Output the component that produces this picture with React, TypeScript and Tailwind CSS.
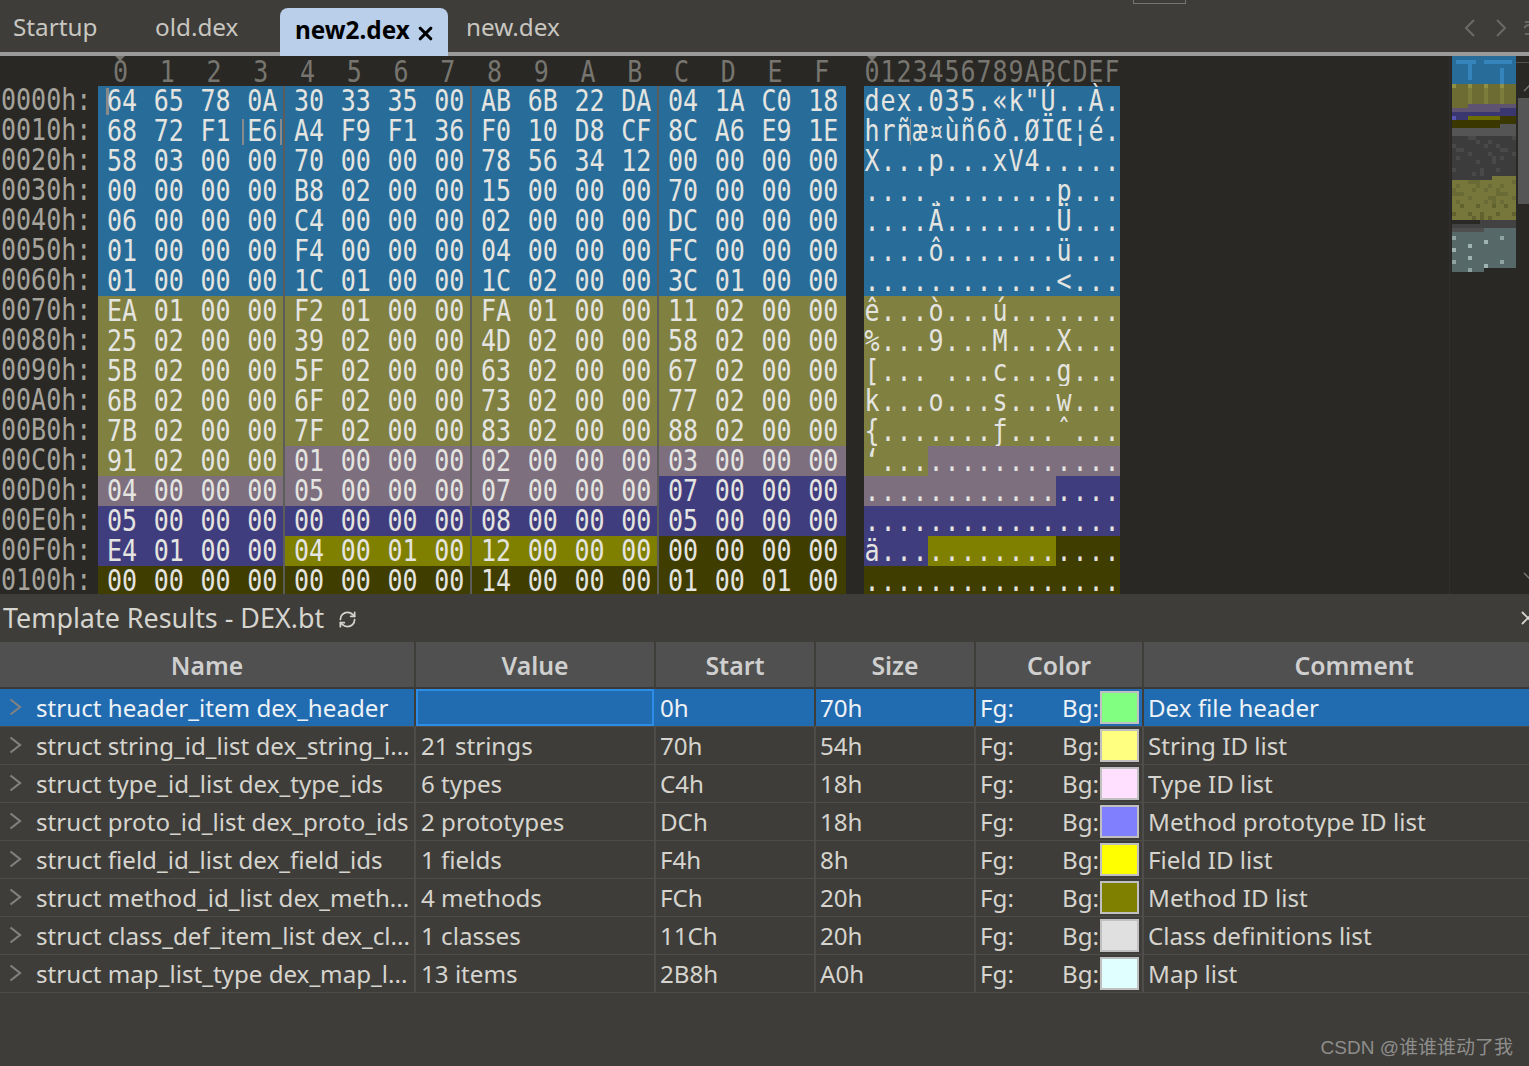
import React from 'react';
import { RefreshCw, X } from 'lucide-react';

const hexRows = [
  '64 65 78 0A 30 33 35 00 AB 6B 22 DA 04 1A C0 18',
  '68 72 F1 E6 A4 F9 F1 36 F0 10 D8 CF 8C A6 E9 1E',
  '58 03 00 00 70 00 00 00 78 56 34 12 00 00 00 00',
  '00 00 00 00 B8 02 00 00 15 00 00 00 70 00 00 00',
  '06 00 00 00 C4 00 00 00 02 00 00 00 DC 00 00 00',
  '01 00 00 00 F4 00 00 00 04 00 00 00 FC 00 00 00',
  '01 00 00 00 1C 01 00 00 1C 02 00 00 3C 01 00 00',
  'EA 01 00 00 F2 01 00 00 FA 01 00 00 11 02 00 00',
  '25 02 00 00 39 02 00 00 4D 02 00 00 58 02 00 00',
  '5B 02 00 00 5F 02 00 00 63 02 00 00 67 02 00 00',
  '6B 02 00 00 6F 02 00 00 73 02 00 00 77 02 00 00',
  '7B 02 00 00 7F 02 00 00 83 02 00 00 88 02 00 00',
  '91 02 00 00 01 00 00 00 02 00 00 00 03 00 00 00',
  '04 00 00 00 05 00 00 00 07 00 00 00 07 00 00 00',
  '05 00 00 00 00 00 00 00 08 00 00 00 05 00 00 00',
  'E4 01 00 00 04 00 01 00 12 00 00 00 00 00 00 00',
  '00 00 00 00 00 00 00 00 14 00 00 00 01 00 01 00',
];

const columns = '0123456789ABCDEF'.split('');

// background of a byte depends on which template struct owns it
const byteBg = (offset: number) => {
  if (offset < 0x70) return 'bg-[#286d9a]';
  if (offset < 0xc4) return 'bg-[#808040]';
  if (offset < 0xdc) return 'bg-[#7e6f7f]';
  if (offset < 0xf4) return 'bg-[#403d7f]';
  if (offset < 0xfc) return 'bg-[#808000]';
  return 'bg-[#403d00]';
};

const decoder = new TextDecoder('windows-1252');
const toAscii = (value: number) => {
  if (value < 0x20 || value === 0x7f) return '.';
  return decoder.decode(new Uint8Array([value]));
};

const monoFont = { fontFamily: '"DejaVu Sans Mono", monospace' };

const structs = [
  { name: 'struct header_item dex_header', value: '', start: '0h', size: '70h', color: 'bg-[#80ff80]', comment: 'Dex file header' },
  { name: 'struct string_id_list dex_string_i...', value: '21 strings', start: '70h', size: '54h', color: 'bg-[#ffff80]', comment: 'String ID list' },
  { name: 'struct type_id_list dex_type_ids', value: '6 types', start: 'C4h', size: '18h', color: 'bg-[#ffe0ff]', comment: 'Type ID list' },
  { name: 'struct proto_id_list dex_proto_ids', value: '2 prototypes', start: 'DCh', size: '18h', color: 'bg-[#8080ff]', comment: 'Method prototype ID list' },
  { name: 'struct field_id_list dex_field_ids', value: '1 fields', start: 'F4h', size: '8h', color: 'bg-[#ffff00]', comment: 'Field ID list' },
  { name: 'struct method_id_list dex_meth...', value: '4 methods', start: 'FCh', size: '20h', color: 'bg-[#808000]', comment: 'Method ID list' },
  { name: 'struct class_def_item_list dex_cl...', value: '1 classes', start: '11Ch', size: '20h', color: 'bg-[#e0e0e0]', comment: 'Class definitions list' },
  { name: 'struct map_list_type dex_map_l...', value: '13 items', start: '2B8h', size: 'A0h', color: 'bg-[#e0ffff]', comment: 'Map list' },
];

const tableCols = 'grid grid-cols-[416px_240px_160px_160px_168px_420px]';

const Chevron = ({ dir, className }: { dir: 'left' | 'right'; className?: string }) => (
  <svg width="12" height="20" viewBox="0 0 12 20" fill="none" className={className}>
    <path d={dir === 'right' ? 'M2 2l8 8-8 8' : 'M10 2l-8 8 8 8'} stroke="currentColor" strokeWidth="2" />
  </svg>
);

const Tabs = () => (
  <div className="relative h-[56px] shrink-0 bg-[#3e3d39] border-b-4 border-[#9a9a9a] flex items-end text-[24.3px] text-[#c8c6c0]">
    <div className="absolute left-[1133px] top-0 w-[53px] h-[4px] border border-t-0 border-[#77756f]" />
    <div className="w-[142px] h-[48px] pl-[13px] leading-[46px]">Startup</div>
    <div className="w-[138px] h-[48px] pl-[13px] leading-[46px]">old.dex</div>
    <div className="w-[168px] h-[48px] -mb-1 pl-[15px] leading-[44px] rounded-t-lg bg-[#b9cfea] text-black font-bold flex items-start gap-[5px]">
      new2.dex
      <X size={21} strokeWidth={3.6} className="mt-[15px]" />
    </div>
    <div className="h-[48px] pl-[18px] leading-[46px]">new.dex</div>
    <div className="ml-auto mr-[22px] h-[48px] flex items-center gap-[19px] text-[#6b6a66]">
      <Chevron dir="left" />
      <Chevron dir="right" />
    </div>
    <svg width="5" height="14" viewBox="0 0 5 14" fill="none" className="absolute right-0 top-[21px] text-[#6b6a66]">
      <path d="M1 1h4M0 7c2-3 4-3 5-3M1 13h4" stroke="currentColor" strokeWidth="2" />
    </svg>
  </div>
);

const HexHeader = () => (
  <div className="flex h-[30px] pl-[98px] text-[25px] leading-[30px] text-[#77756f] relative" style={monoFont}>
    <div className="absolute left-[115px] top-0 w-0 h-0 border-x-[5px] border-t-[5px] border-x-transparent border-t-[#77756f]" />
    <div className="absolute left-[867px] top-0 w-0 h-0 border-x-[5px] border-t-[5px] border-x-transparent border-t-[#77756f]" />
    {columns.map((c) => (
      <div key={c} className="w-[46.75px] pl-[15px] shrink-0 pt-[3px]">
        <span className="block h-[25px] leading-[25px] scale-y-[1.18]">{c}</span>
      </div>
    ))}
    <div className="ml-[18px] flex pt-[3px]">
      {columns.map((c) => (
        <span key={c} className="block w-4 h-[25px] leading-[25px] text-center scale-y-[1.18]">{c}</span>
      ))}
    </div>
  </div>
);

const HexRow = ({ line, row }: { line: string; row: number }) => {
  const bytes = line.split(' ');
  const base = row * 16;
  return (
    <div className="flex h-[30px] text-[25px] leading-[25px] text-[#e4e4e0] whitespace-nowrap" style={monoFont}>
      <div className="w-[98px] shrink-0 pl-[1px] pt-[1px] text-[#a5a39c]">
        <span className="block h-[25px] scale-y-[1.18]">{base.toString(16).toUpperCase().padStart(4, '0')}h:</span>
      </div>
      {bytes.map((b, i) => (
        <div
          key={i}
          className={`relative w-[46.75px] shrink-0 pl-[9px] pt-[2px] border-[#5c5c5a] ${byteBg(base + i)} ${i % 4 === 3 && i < 15 ? 'border-r-2' : ''}`}
        >
          {base + i === 0 && <div className="absolute left-[8px] top-[2px] w-[3px] h-[27px] bg-[#8a8a8a]" />}
          {base + i === 0x13 && <div className="absolute left-[4px] top-[3px] w-[40px] h-[26px] border-x-2 border-[#8a8a8a]" />}
          <span className="block h-[25px] scale-y-[1.18]">{b}</span>
        </div>
      ))}
      <div className="ml-[18px] flex">
        {bytes.map((b, i) => (
          <span key={i} className={`relative block w-4 pt-[2px] text-center ${byteBg(base + i)}`}>
            {base + i === 0x13 && <span className="absolute -left-[2px] top-[3px] w-[22px] h-[26px] border-x border-[#8a8a8a]" />}
            <span className="block h-[25px] scale-y-[1.18]">{toAscii(parseInt(b, 16))}</span>
          </span>
        ))}
      </div>
    </div>
  );
};

// minimap blocks, [x, y, w, h, colour] in 4px cells from the top-left of the strip
const miniBands: [number, number, number, number, string][] = [
  [0, 0, 16, 7, '#286d9a'],
  [1, 1, 5, 1, '#3585bc'],
  [8, 1, 7, 1, '#3585bc'],
  [4, 2, 1, 4, '#3585bc'],
  [12, 3, 1, 4, '#3585bc'],
  [0, 7, 16, 5, '#6c6c33'],
  [0, 12, 4, 1, '#6c6c33'],
  [0, 7, 1, 1, '#8f8f45'],
  [4, 7, 1, 1, '#8f8f45'],
  [8, 7, 1, 1, '#8f8f45'],
  [12, 7, 1, 1, '#8f8f45'],
  [4, 8, 1, 4, '#7c7c3c'],
  [8, 8, 1, 4, '#7c7c3c'],
  [12, 8, 1, 4, '#7c7c3c'],
  [4, 12, 12, 1, '#5e5370'],
  [0, 13, 12, 1, '#5e5370'],
  [12, 13, 4, 2, '#3a3670'],
  [0, 14, 12, 1, '#3a3670'],
  [0, 15, 4, 1, '#3a3670'],
  [0, 15, 1, 1, '#5554b0'],
  [4, 15, 8, 1, '#6e6e00'],
  [12, 15, 4, 1, '#3a3800'],
  [0, 16, 16, 2, '#3a3800'],
  [12, 17, 4, 1, '#555555'],
  [0, 18, 16, 2, '#555555'],
  [0, 20, 16, 10, '#3c3c3c'],
  [0, 30, 10, 1, '#3c3c3c'],
  [10, 30, 6, 1, '#77773c'],
  [0, 31, 16, 10, '#77773c'],
  [7, 41, 9, 1, '#424242'],
  [0, 42, 16, 1, '#424242'],
  [0, 43, 16, 1, '#4f4f4f'],
  [8, 43, 8, 1, '#566868'],
  [0, 44, 16, 10, '#566868'],
  [8, 53, 8, 1, '#292824'],
  [0, 45, 1, 1, '#8fa3a3'],
  [0, 48, 1, 1, '#9fb3b3'],
  [0, 51, 1, 1, '#8fa3a3'],
  [4, 47, 1, 1, '#9fb3b3'],
  [4, 50, 1, 1, '#9fb3b3'],
  [4, 53, 1, 1, '#8fa3a3'],
  [8, 46, 1, 1, '#9fb3b3'],
  [8, 52, 1, 1, '#9fb3b3'],
  [12, 45, 1, 1, '#8fa3a3'],
  [12, 51, 1, 1, '#8fa3a3'],
];

const miniNoise = (x: number, y: number) => ((x * 7 + y * 13 + x * y * 3) % 11);

const Minimap = () => {
  const noise: React.ReactElement[] = [];
  for (let y = 20; y < 41; y++) {
    for (let x = 0; x < 16; x++) {
      const n = miniNoise(x, y);
      if (y < 30 && n < 2) noise.push(<rect key={`${x}-${y}`} x={x * 4} y={y * 4} width="4" height="4" fill="#494949" />);
      if (y >= 31 && n < 3) noise.push(<rect key={`${x}-${y}`} x={x * 4} y={y * 4} width="4" height="4" fill={y > 36 ? '#62622e' : '#6a6a34'} />);
    }
  }
  return (
    <svg width="64" height="216" viewBox="0 0 64 216" className="shrink-0" shapeRendering="crispEdges">
      {miniBands.map(([x, y, w, h, fill], i) => (
        <rect key={i} x={x * 4} y={y * 4} width={w * 4} height={h * 4} fill={fill} />
      ))}
      {noise}
    </svg>
  );
};

const Scrollbar = () => (
  <div className="relative flex-1">
    <div className="absolute left-0 right-0 top-[6px] h-px bg-[#55544f]" />
    <div className="absolute left-[2px] right-0 top-[42px] h-[106px] bg-[#565656]" />
    <Chevron dir="left" className="absolute left-[8px] top-[22px] rotate-90 text-[#77756f] scale-75" />
    <Chevron dir="right" className="absolute left-[8px] top-[510px] rotate-90 text-[#77756f] scale-75" />
  </div>
);

const HexView = () => (
  <div className="flex h-[538px] shrink-0 bg-[#292824] overflow-hidden">
    <div className="w-[1450px] shrink-0 overflow-hidden border-r border-[#302e2f]">
      <HexHeader />
      {hexRows.map((line, i) => (
        <HexRow key={i} line={line} row={i} />
      ))}
    </div>
    <div className="ml-[2px]">
      <Minimap />
    </div>
    <Scrollbar />
  </div>
);

const TemplateTable = () => (
  <div className="text-[24.15px] text-[#d6d4ce]">
    <div className={`${tableCols} h-[47px] bg-[#505050] border-b-2 border-[#3a3936] font-semibold text-[24.8px] text-[#cfcfcf] text-center leading-[47px]`}>
      {['Name', 'Value', 'Start', 'Size', 'Color', 'Comment'].map((h, i) => (
        <div key={h} className={i < 5 ? 'border-r-2 border-[#3e3d39]' : ''}>{h}</div>
      ))}
    </div>
    {structs.map((s, i) => {
      const selected = i === 0;
      const line = selected ? 'border-[#3e3d39]' : 'border-[#4e4d4a]';
      return (
        <div
          key={s.name}
          className={`${tableCols} h-[38px] border-b leading-[37px] border-[#4e4d4a] ${selected ? 'bg-[#216bb0] text-[#eef2f6]' : ''}`}
        >
          <div className={`flex items-center border-r-2 ${line} pl-[9px] whitespace-nowrap overflow-hidden`}>
            <svg width="13" height="18" viewBox="0 0 13 18" fill="none" className="text-[#808080] shrink-0 -mt-[2px]">
              <path d="M1.5 1.5L11 9l-9.5 7.5" stroke="currentColor" strokeWidth="2.2" />
            </svg>
            <span className="ml-[14px]">{s.name}</span>
          </div>
          <div className={`pl-[5px] ${selected ? 'border-2 border-[#2b8de8] mr-[2px] leading-[33px]' : `border-r-2 ${line}`}`}>{s.value}</div>
          <div className={`border-r-2 ${line} pl-[4px]`}>{s.start}</div>
          <div className={`border-r-2 ${line} pl-[4px]`}>{s.size}</div>
          <div className={`border-r-2 ${line} pl-[4px] flex justify-between items-center pr-[3px]`}>
            <span>Fg:</span>
            <span className="flex items-center gap-px">
              Bg:
              <span className={`block w-[39px] h-[33px] border-2 border-[#c0c0c0] ${s.color}`} />
            </span>
          </div>
          <div className="pl-[4px]">{s.comment}</div>
        </div>
      );
    })}
  </div>
);

const App = () => (
  <div className="w-[1529px] h-[1066px] overflow-hidden flex flex-col bg-[#3e3d39]" style={{ fontFamily: '"Noto Sans", sans-serif' }}>
    <Tabs />
    <HexView />
    <div className="h-[48px] shrink-0 flex items-center pl-[3px] text-[26.9px] text-[#d6d4ce] overflow-hidden">
      Template Results - DEX.bt
      <RefreshCw size={19} strokeWidth={2.2} className="ml-[14px] mt-[2px]" />
      <X size={22} className="ml-auto -mr-[10px] text-[#d6d4ce]" />
    </div>
    <TemplateTable />
    <div className="flex-1 flex items-end justify-end pr-[16px] pb-[4px] text-[19px] text-[#8e8e8c]" style={{ fontFamily: '"Liberation Sans", "Noto Sans CJK SC", sans-serif' }}>
      CSDN @谁谁谁动了我
    </div>
  </div>
);

export default App;
